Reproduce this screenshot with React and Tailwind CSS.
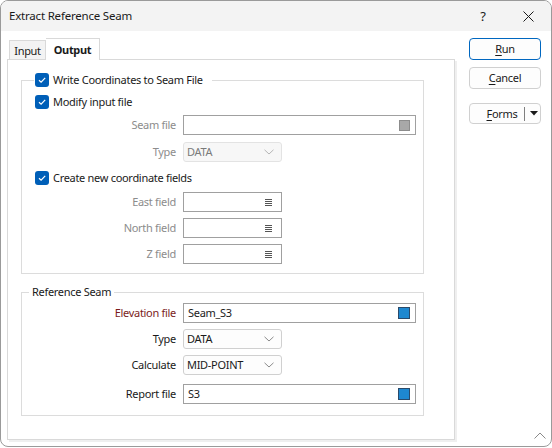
import React from "react";

const Check = () => (
  <span className="w-[14px] h-[14px] rounded-[3px] bg-[#005fb8] flex items-center justify-center shrink-0">
    <svg width="10" height="10" viewBox="0 0 10 10">
      <path d="M2 5.2 L4.1 7.2 L8.2 2.8" fill="none" stroke="#fff" strokeWidth="1.2" />
    </svg>
  </span>
);

const Chevron = ({ color = "#8a8a8a" }) => (
  <svg width="10" height="6" viewBox="0 0 10 6">
    <path d="M0.5 0.8 L5 5 L9.5 0.8" fill="none" stroke={color} strokeWidth="1" />
  </svg>
);

const Lines = () => (
  <svg width="7" height="8" viewBox="0 0 7 8">
    <path d="M0 1.5H7M0 3.5H7M0 5.5H7M0 7.5H7" stroke="#555" strokeWidth="1" />
  </svg>
);

const Label = ({ children, cls = "text-[#8c8c8c]" }) => (
  <div className={`w-[155px] text-right pr-[1px] ${cls}`}>{children}</div>
);

const Row = ({ label, labelCls, children, mt }) => (
  <div className={`flex items-center h-[20px] ${mt}`}>
    <Label cls={labelCls}>{label}</Label>
    <div className="ml-[6px] flex">{children}</div>
  </div>
);

const Btn = ({ first, rest, primary, h = "h-[22px]", mt }) => (
  <div
    className={`w-[72px] ${h} ${mt} rounded-[4px] border bg-[#fdfdfd] flex items-center justify-center ${
      primary ? "border-[#0067c0]" : "border-[#d0d0d0]"
    }`}
  >
    <span>
      <span className="underline underline-offset-[2px]">{first}</span>
      {rest}
    </span>
  </div>
);

export default function App() {
  return (
    <div className="w-[552px] h-[448px] bg-white font-['Noto_Sans',sans-serif] text-[11px] leading-[16px] text-[#1a1a1a]">
      <div className="w-[552px] h-[447px] border border-[#9a9a9a] rounded-[8px] overflow-hidden flex flex-col bg-white relative">
        {/* title bar */}
        <div className="h-[30px] bg-[#f3f3f3] flex items-center pl-[8px] shrink-0">
          <span className="text-[11.5px] tracking-[-0.2px]">Extract Reference Seam</span>
          <span className="ml-auto w-[20px] text-center text-[13px] mr-[30px]">?</span>
          <svg width="11" height="11" viewBox="0 0 11 11" className="mr-[17px]">
            <path d="M0.5 0.5 L10.5 10.5 M10.5 0.5 L0.5 10.5" stroke="#1a1a1a" strokeWidth="1" />
          </svg>
        </div>

        {/* body */}
        <div className="flex flex-1 tracking-[-0.3px]">
          {/* left: tabs + panel */}
          <div className="ml-[6px] mt-[7px] flex flex-col">
            <div className="flex items-end h-[22px] ml-[2px] -mb-[1px]">
              <div className="h-[20px] w-[37px] border border-[#d9d9d9] border-b-0 bg-[#f3f3f3] flex items-center justify-center pt-[1px]">
                Input
              </div>
              <div className="h-[22px] w-[54px] border border-[#d9d9d9] border-b-0 border-l-0 bg-white relative z-10 flex items-center justify-center font-bold">
                Output
              </div>
            </div>
            <div className="w-[448px] h-[381px] border border-[#d9d9d9] bg-white shadow-[2px_2px_0_#efefef] pt-[20px]">
              {/* group 1 */}
              <div className="ml-[13px] w-[403px] border border-[#dcdcdc] pb-[9px]">
                <div className="-mt-[9px] ml-[12px] pl-[1px] pr-[9px] h-[16px] bg-white flex w-fit items-center gap-[4px]">
                  <Check />
                  <span>Write Coordinates to Seam File</span>
                </div>
                <div className="mt-[6px] ml-[13px] h-[16px] flex items-center gap-[4px]">
                  <Check />
                  <span>Modify input file</span>
                </div>
                <Row label="Seam file" mt="mt-[5px]">
                  <div className="w-[233px] h-[20px] border border-[#a0a0a0] bg-white flex items-center justify-end pr-[5px]">
                    <span className="w-[11px] h-[11px] bg-[#a8a8a8] border border-[#8c8c8c]" />
                  </div>
                </Row>
                <Row label="Type" mt="mt-[7px]">
                  <div className="w-[99px] h-[20px] border border-[#e3e3e3] rounded-[3px] bg-[#f7f7f7] flex items-center pl-[3px] pr-[7px] text-[#7a7a7a]">
                    <span>DATA</span>
                    <span className="ml-auto flex">
                      <Chevron color="#b5b5b5" />
                    </span>
                  </div>
                </Row>
                <div className="mt-[8px] ml-[13px] h-[16px] flex items-center gap-[4px]">
                  <Check />
                  <span>Create new coordinate fields</span>
                </div>
                {["East field", "North field", "Z field"].map((l) => (
                  <Row key={l} label={l} mt="mt-[6px]">
                    <div className="w-[99px] h-[20px] border border-[#a0a0a0] bg-white flex items-center justify-end pr-[9px]">
                      <Lines />
                    </div>
                  </Row>
                ))}
              </div>

              {/* group 2 */}
              <div className="mt-[18px] ml-[13px] w-[403px] border border-[#dcdcdc] pb-[11px]">
                <div className="-mt-[9px] ml-[7px] px-[3px] h-[16px] bg-white flex w-fit items-center">
                  Reference Seam
                </div>
                <Row label="Elevation file" labelCls="text-[#7b1c1c]" mt="mt-[3px]">
                  <div className="w-[233px] h-[20px] border border-[#a0a0a0] bg-white flex items-center pl-[4px] pr-[5px]">
                    <span>Seam_S3</span>
                    <span className="ml-auto w-[12px] h-[12px] bg-[#1e88d0] border border-[#2a4a6a]" />
                  </div>
                </Row>
                <Row label="Type" labelCls="text-[#1a1a1a]" mt="mt-[6px]">
                  <div className="w-[99px] h-[20px] border border-[#d0d0d0] rounded-[3px] bg-[#fdfdfd] flex items-center pl-[3px] pr-[7px]">
                    <span>DATA</span>
                    <span className="ml-auto flex">
                      <Chevron />
                    </span>
                  </div>
                </Row>
                <Row label="Calculate" labelCls="text-[#1a1a1a]" mt="mt-[6px]">
                  <div className="w-[99px] h-[20px] border border-[#d0d0d0] rounded-[3px] bg-[#fdfdfd] flex items-center pl-[3px] pr-[7px]">
                    <span>MID-POINT</span>
                    <span className="ml-auto flex">
                      <Chevron />
                    </span>
                  </div>
                </Row>
                <Row label="Report file" labelCls="text-[#1a1a1a]" mt="mt-[9px]">
                  <div className="w-[233px] h-[20px] border border-[#a0a0a0] bg-white flex items-center pl-[4px] pr-[5px]">
                    <span>S3</span>
                    <span className="ml-auto w-[12px] h-[12px] bg-[#1e88d0] border border-[#2a4a6a]" />
                  </div>
                </Row>
              </div>
            </div>
          </div>

          {/* right: buttons */}
          <div className="ml-[14px] mt-[7px] flex flex-col">
            <Btn first="R" rest="un" primary />
            <Btn first="C" rest="ancel" mt="mt-[7px]" />
            <div className="mt-[14px] w-[72px] h-[21px] rounded-[4px] border border-[#d0d0d0] bg-[#fdfdfd] flex items-center">
              <span className="ml-[15px] w-[34px] text-center">
                <span className="underline underline-offset-[2px]">F</span>orms
              </span>
              <span className="ml-[5px] w-px h-[14px] bg-[#808080]" />
              <svg width="8" height="5" viewBox="0 0 8 5" className="ml-[5px]">
                <path d="M0 0 H8 L4 4.5 Z" fill="#1a1a1a" />
              </svg>
            </div>
          </div>
        </div>

        {/* resize grip */}
        <svg width="12" height="7" viewBox="0 0 12 7" className="absolute right-[5px] bottom-[7px]">
          <path d="M0.5 6.5 L6 1 L11.5 6.5" fill="none" stroke="#8a8a8a" strokeWidth="1" />
        </svg>
      </div>
    </div>
  );
}
